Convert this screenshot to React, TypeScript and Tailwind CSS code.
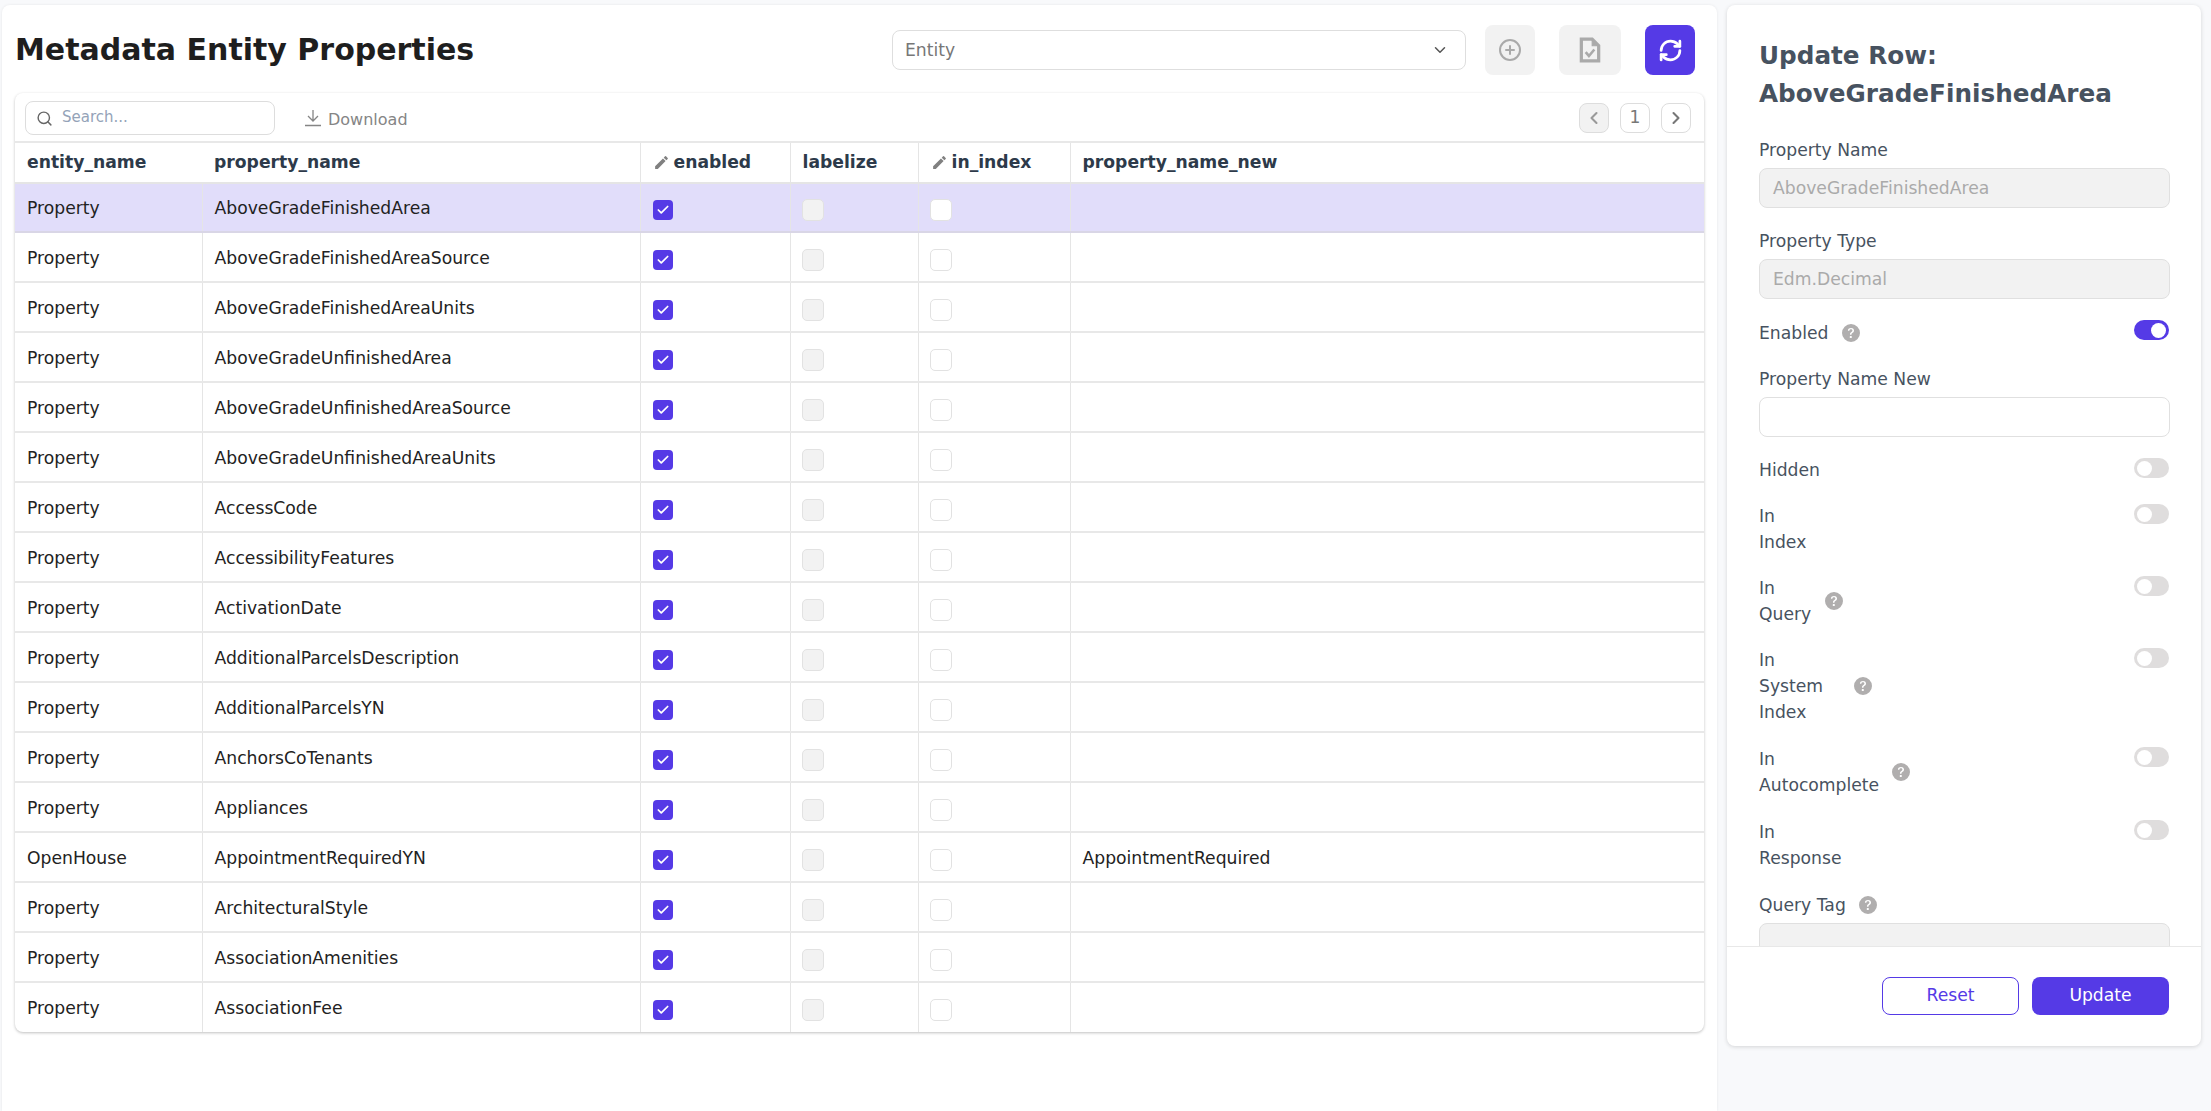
import { ChevronDown, ChevronLeft, ChevronRight, CirclePlus, RefreshCw, Search, Check } from 'lucide-react'
import { MdEdit } from 'react-icons/md'
import { BsFillQuestionCircleFill } from 'react-icons/bs'

const rows = [
  ['Property', 'AboveGradeFinishedArea', ''],
  ['Property', 'AboveGradeFinishedAreaSource', ''],
  ['Property', 'AboveGradeFinishedAreaUnits', ''],
  ['Property', 'AboveGradeUnfinishedArea', ''],
  ['Property', 'AboveGradeUnfinishedAreaSource', ''],
  ['Property', 'AboveGradeUnfinishedAreaUnits', ''],
  ['Property', 'AccessCode', ''],
  ['Property', 'AccessibilityFeatures', ''],
  ['Property', 'ActivationDate', ''],
  ['Property', 'AdditionalParcelsDescription', ''],
  ['Property', 'AdditionalParcelsYN', ''],
  ['Property', 'AnchorsCoTenants', ''],
  ['Property', 'Appliances', ''],
  ['OpenHouse', 'AppointmentRequiredYN', 'AppointmentRequired'],
  ['Property', 'ArchitecturalStyle', ''],
  ['Property', 'AssociationAmenities', ''],
  ['Property', 'AssociationFee', ''],
]

function Help() {
  return <BsFillQuestionCircleFill size={18} className="text-[#b0aeae] shrink-0" />
}

function Toggle({ on = false }: { on?: boolean }) {
  return (
    <span className={`w-[35px] h-[20px] rounded-full flex items-center shrink-0 px-[3px] mr-px ${on ? 'bg-[#553ae6] justify-end' : 'bg-[#dfdddd] justify-start mt-px'}`}>
      <span className="w-[15px] h-[15px] rounded-full bg-white" />
    </span>
  )
}

function SwitchRow({ words, help, helpGap, on, className }: { words: string[]; help?: boolean; helpGap?: string; on?: boolean; className: string }) {
  return (
    <div className={`flex justify-between items-start ${className}`}>
      <div className={`flex items-center ${helpGap}`}>
        <div className="leading-[26px]">
          {words.map(w => <div key={w}>{w}</div>)}
        </div>
        {help && <Help />}
      </div>
      <Toggle on={on} />
    </div>
  )
}

function TextField({ label, value, disabled, className }: { label: string; value?: string; disabled?: boolean; className: string }) {
  return (
    <div className={className}>
      <div className="leading-[26px] h-[26px]">{label}</div>
      <div className={`mt-[5px] h-[40px] rounded-lg border px-[13px] pt-px flex items-center ${disabled ? 'bg-[#f2f2f2] border-[#e0e0e0] text-[#aaaaaa]' : 'bg-white border-[#e0e0e0]'}`}>
        {value}
      </div>
    </div>
  )
}

export default function App() {
  return (
    <div className="h-[1111px] overflow-hidden bg-[#f8f9fb] flex gap-[10px] pt-[5px] pl-[2px] font-['DejaVu_Sans',sans-serif] text-[17.2px]">
      <div className="w-[1715px] h-[1106px] bg-white rounded-t-lg shadow-[0_0_3px_rgba(0,0,0,0.08)] pt-[20px] pl-[13px] pr-[22px]">
        <div className="flex items-center h-[50px]">
          <h1 className="text-[30px] font-bold text-[#1e1e1e] leading-[50px]">Metadata Entity Properties</h1>
          <div className="ml-auto w-[574px] h-[40px] rounded-lg border border-[#dedede] flex items-center justify-between pl-[12px] pr-[16px] text-[#777777]">
            <span className="mt-[2px]">Entity</span>
            <ChevronDown size={18} className="text-[#555555]" />
          </div>
          <button className="ml-[19px] w-[50px] h-[50px] rounded-lg bg-[#f2f2f2] flex items-center justify-center">
            <CirclePlus size={24} strokeWidth={2} className="text-[#aaaaaa]" />
          </button>
          <button className="ml-[24px] w-[62px] h-[50px] rounded-lg bg-[#f2f2f2] flex items-center justify-center">
            <svg width="24" height="26" viewBox="0 0 20 24" fill="none">
              <path d="M2 2h10l6 6v14H2z" stroke="#aaaaaa" strokeWidth="3" strokeLinejoin="miter" />
              <path d="M12 2l6 6h-6z" fill="#aaaaaa" stroke="#aaaaaa" strokeWidth="1" />
              <path d="M6 14l3 3.5 5-6" stroke="#aaaaaa" strokeWidth="2.4" />
            </svg>
          </button>
          <button className="ml-[24px] w-[50px] h-[50px] rounded-lg bg-[#553ae6] flex items-center justify-center">
            <RefreshCw size={25} strokeWidth={2.6} className="text-white" />
          </button>
        </div>

        <div className="mt-[18px] w-[1689px] rounded-lg bg-white shadow-[0_1px_3px_rgba(0,0,0,0.25)]">
          <div className="h-[50px] flex items-start px-[10px] border-b-2 border-[#e8e8e8]">
            <div className="mt-[8px] w-[250px] h-[34px] rounded-lg border border-[#dddddd] flex items-center pl-[10px] gap-[9px] text-[15px] text-[#94a3b8]">
              <Search size={17} className="text-[#666666]" />
              <span className="-mt-[1px]">Search...</span>
            </div>
            <div className="ml-[30px] mt-[15px] flex items-center gap-[7px] text-[#858585] text-[16px] leading-[24px]">
              <svg width="16" height="18" viewBox="0 0 16 18" fill="none" stroke="#858585" strokeWidth="1.3" className="-mt-[4px]">
                <path d="M8 1v11M3 7l5 5 5-5M0 16.5h16" />
              </svg>
              <span>Download</span>
            </div>
            <div className="ml-auto mr-[3px] mt-[10px] flex gap-[11px] text-[#777777]">
              <div className="w-[30px] h-[30px] rounded-lg border border-[#dddddd] bg-[#f2f2f2] flex items-center justify-center">
                <ChevronLeft size={20} strokeWidth={2.5} className="text-[#999999]" />
              </div>
              <div className="w-[30px] h-[30px] rounded-lg border border-[#dddddd] flex items-center justify-center">1</div>
              <div className="w-[30px] h-[30px] rounded-lg border border-[#dddddd] flex items-center justify-center">
                <ChevronRight size={20} strokeWidth={2.5} className="text-[#777777]" />
              </div>
            </div>
          </div>

          <table className="w-full table-fixed border-collapse">
            <colgroup>
              <col className="w-[187px]" />
              <col className="w-[438px]" />
              <col className="w-[150px]" />
              <col className="w-[128px]" />
              <col className="w-[152px]" />
              <col />
            </colgroup>
            <thead>
              <tr className="h-[40px] text-left text-[#2d3a4a] font-bold">
                <th className="pl-[12px] pt-px font-bold">entity_name</th>
                <th className="pl-[12px] pt-px font-bold">property_name</th>
                <th className="pl-[12px] pt-px font-bold border-l border-[#e5e5e5]">
                  <span className="flex items-center gap-[4px]"><MdEdit size={17} className="text-[#808080]" />enabled</span>
                </th>
                <th className="pl-[12px] pt-px font-bold border-l border-[#e5e5e5]">labelize</th>
                <th className="pl-[12px] pt-px font-bold border-l border-[#e5e5e5]">
                  <span className="flex items-center gap-[4px]"><MdEdit size={17} className="text-[#808080]" />in_index</span>
                </th>
                <th className="pl-[12px] pt-px font-bold border-l border-[#e5e5e5]">property_name_new</th>
              </tr>
            </thead>
            <tbody className="text-[#222222]">
              {rows.map((r, i) => (
                <tr key={r[1]} className={`border-t-2 ${i === 0 ? 'h-[49px] bg-[#e1ddfa] border-[#e5e5e5]' : i === 1 ? 'h-[50px] border-[#d9d6e6]' : 'h-[50px] border-[#e8e8e8]'}`}>
                  <td className="pl-[12px] pt-[3px]">{r[0]}</td>
                  <td className="pl-[12px] pt-[3px] border-l border-[#e5e5e5]">{r[1]}</td>
                  <td className="pl-[12px] border-l border-[#e5e5e5]">
                    <span className="mt-[5px] w-[20px] h-[20px] rounded-[4px] bg-[#553ae6] flex items-center justify-center">
                      <Check size={14} strokeWidth={3} className="text-white" />
                    </span>
                  </td>
                  <td className="pl-[11px] border-l border-[#e5e5e5]">
                    <span className="mt-[5px] block w-[22px] h-[22px] rounded-[5px] bg-[#f2f2f2] border border-[#e2e2e2]" />
                  </td>
                  <td className="pl-[11px] border-l border-[#e5e5e5]">
                    <span className="mt-[5px] block w-[22px] h-[22px] rounded-[5px] bg-white border border-[#e2e2e2]" />
                  </td>
                  <td className="pl-[12px] pt-[3px] border-l border-[#e5e5e5]">{r[2]}</td>
                </tr>
              ))}
            </tbody>
          </table>
        </div>
      </div>

      <div className="w-[474px] h-[1041px] bg-white rounded-lg shadow-[0_1px_4px_rgba(0,0,0,0.15)] flex flex-col text-[#475260]">
        <div className="flex-1 overflow-hidden pl-[32px] pr-[31px] pt-[32px]">
          <h2 className="text-[24.7px] font-bold leading-[38px] text-[#475260]">Update Row:<br />AboveGradeFinishedArea</h2>
          <TextField label="Property Name" value="AboveGradeFinishedArea" disabled className="mt-[24px]" />
          <TextField label="Property Type" value="Edm.Decimal" disabled className="mt-[20px]" />
          <SwitchRow words={['Enabled']} help on helpGap="gap-[14px]" className="mt-[21px]" />
          <TextField label="Property Name New" className="mt-[20px]" />
          <SwitchRow words={['Hidden']} className="mt-[20px]" />
          <SwitchRow words={['In', 'Index']} className="mt-[20px]" />
          <SwitchRow words={['In', 'Query']} help helpGap="gap-[14px]" className="mt-[20px]" />
          <SwitchRow words={['In', 'System', 'Index']} help helpGap="gap-[31px]" className="mt-[20px]" />
          <SwitchRow words={['In', 'Autocomplete']} help helpGap="gap-[13px]" className="mt-[21px]" />
          <SwitchRow words={['In', 'Response']} className="mt-[21px]" />
          <div className="mt-[21px] flex items-center gap-[13px] leading-[26px]">Query Tag <Help /></div>
          <div className="mt-[5px] h-[40px] rounded-lg border border-[#e0e0e0] bg-[#f2f2f2]" />
        </div>
        <div className="h-[100px] shrink-0 border-t border-[#e8e8e8] flex justify-end items-start gap-[13px] pt-[30px] pr-[32px]">
          <button className="w-[137px] h-[38px] rounded-lg border border-[#553ae6] bg-white text-[#553ae6]">Reset</button>
          <button className="w-[137px] h-[38px] rounded-lg bg-[#553ae6] text-white">Update</button>
        </div>
      </div>
    </div>
  )
}
